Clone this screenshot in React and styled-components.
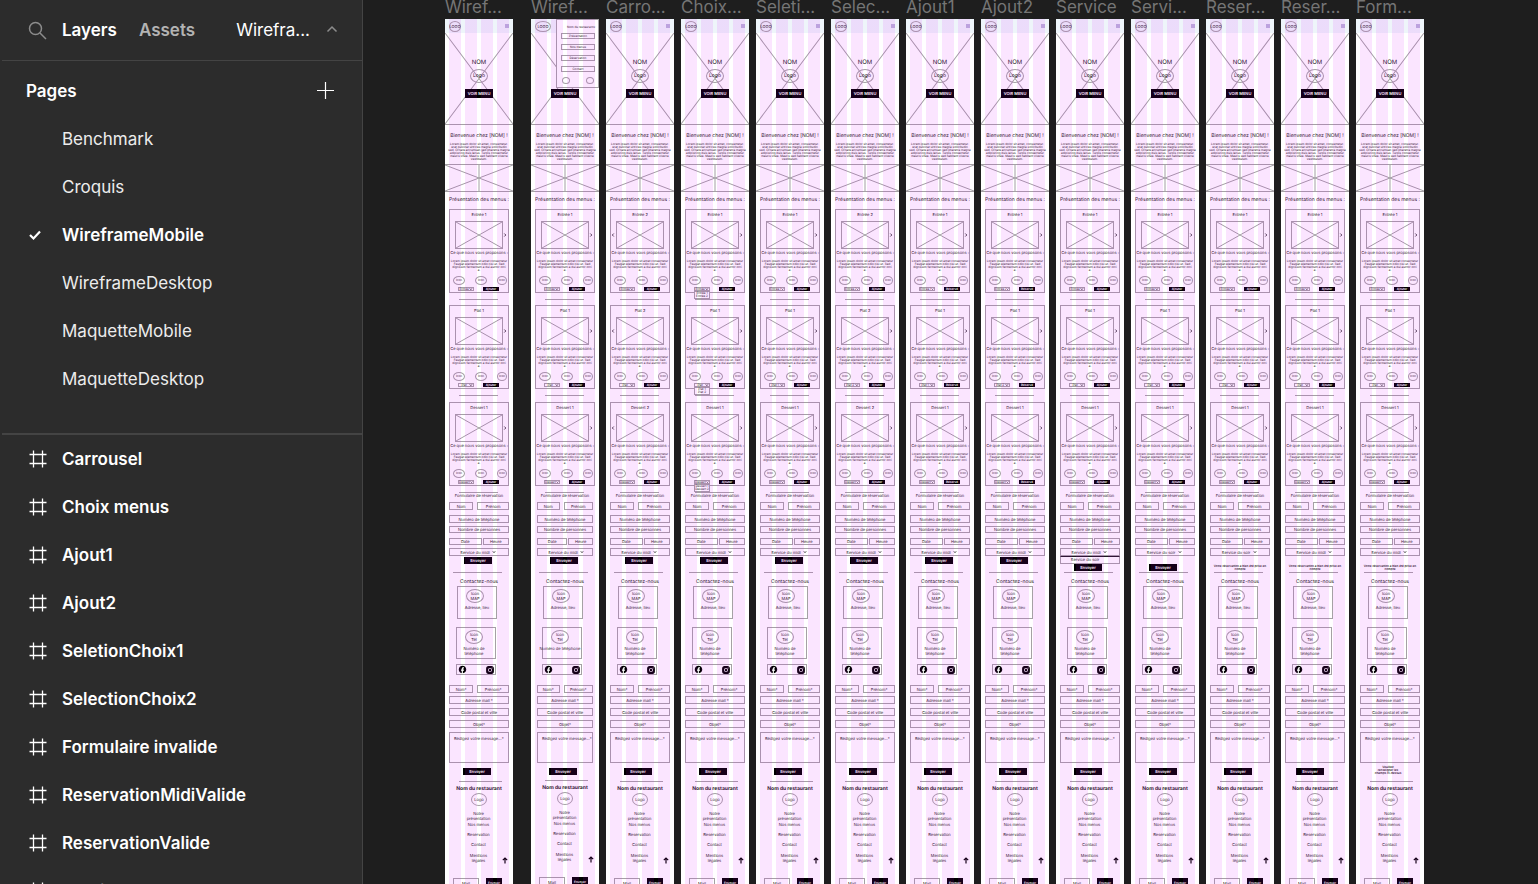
import React from "react";
import styled, { createGlobalStyle, css } from "styled-components";
import { MdFacebook } from "react-icons/md";
import { AiFillInstagram } from "react-icons/ai";

const ink = "#1d1720";
const line = "#a5a1a5";

const GlobalStyle = createGlobalStyle`
  * { box-sizing: border-box; }
  body {
    margin: 0;
    background: #1e1e1e;
    font-family: Inter, "Liberation Sans", sans-serif;
  }
  button, input, select, textarea {
    font-family: inherit;
    text-rendering: inherit;
    margin: 0;
    padding: 0;
    border: 0;
    border-radius: 0;
    background: none;
    color: inherit;
  }
  h1, h2, h3, p, ul { margin: 0; padding: 0; font-weight: 400; }
  ul { list-style: none; }
  svg { display: block; }
`;

/* ---------- editor shell ---------- */

const Editor = styled.div`
  display: flex;
  height: 100vh;
  overflow: hidden;
`;

const Sidebar = styled.aside`
  flex: 0 0 363px;
  padding-left: 2px;
  overflow: hidden;
  background: #2c2c2c;
  border-right: 1px solid #444;
  color: #fff;
  font-size: 17px;
  line-height: 24px;
`;

const TabBar = styled.div`
  display: flex;
  align-items: center;
  height: 61px;
  padding: 0 24px 0 26px;
  border-bottom: 1px solid #444;
`;

const SearchButton = styled.button`
  color: #8c8c8c;
  margin-right: 15px;
`;

const Tab = styled.button`
  font-size: 17px;
  line-height: 24px;
  font-weight: 600;
  margin-right: 22px;
  color: ${(p) => (p.$active ? "#fff" : "#b3b3b3")};
`;

const PagePicker = styled.button`
  display: flex;
  align-items: center;
  gap: 16px;
  margin-left: auto;
  font-size: 17px;
  line-height: 24px;
  color: #fff;
  svg { color: #8c8c8c; }
`;

const PagesPanel = styled.section`
  padding-bottom: 30px;
  border-bottom: 2px solid #444;
`;

const PagesHeader = styled.div`
  display: flex;
  align-items: flex-end;
  justify-content: space-between;
  height: 54px;
  padding: 0 28px 12px 24px;
`;

const PagesTitle = styled.h2`
  font-size: 17px;
  font-weight: 600;
`;

const AddButton = styled.button`
  height: 26px;
`;

const Row = styled.button`
  display: flex;
  align-items: center;
  width: 100%;
  height: 48px;
  padding-left: 26px;
  font-size: 17px;
  line-height: 24px;
  text-align: left;
  color: ${(p) => (p.$strong ? "#fff" : "#ececec")};
  font-weight: ${(p) => (p.$strong ? 600 : 400)};
`;

const RowIcon = styled.span`
  flex: 0 0 34px;
  padding-left: ${(p) => (p.$frame ? 1 : 0)}px;
`;

const Canvas = styled.main`
  display: flex;
  flex: 1;
  gap: 7px;
  min-width: 0;
  padding-left: 82px;
  overflow: hidden;
`;

/* ---------- wireframe frames ---------- */

const FrameItem = styled.section`
  flex: 0 0 68px;
  width: 68px;
  min-width: 0;
  margin-right: ${(p) => (p.$apart ? "11px" : "0")};
`;

const FrameLabel = styled.h2`
  height: 19px;
  font-size: 17px;
  line-height: 14px;
  white-space: nowrap;
  color: #757575;
`;

const Artboard = styled.div`
  position: relative;
  display: flex;
  flex-direction: column;
  background: #fff;
  color: ${ink};
  font-size: 4px;
  line-height: 5px;
  text-align: center;
  text-rendering: geometricPrecision;
  min-height: 100vh;
  &::after {
    content: "";
    position: absolute;
    inset: 0;
    pointer-events: none;
    background: repeating-linear-gradient(
      90deg,
      transparent 0 4px,
      rgba(216, 0, 255, 0.1) 4px 16px
    );
  }
`;

const SiteNav = styled.div`
  display: flex;
  align-items: center;
  justify-content: space-between;
  height: 14px;
  padding: 0 4px 0 4px;
  background: #eef5fa;
`;

const Oval = styled.span`
  display: flex;
  flex: none;
  align-items: center;
  justify-content: center;
  width: ${(p) => p.$w}px;
  height: ${(p) => p.$h}px;
  border: 1px solid ${line};
  border-radius: 50%;
  font-size: ${(p) => p.$size || 4}px;
  line-height: 5px;
  white-space: nowrap;
`;

const Hero = styled.div`
  display: grid;
  height: 92px;
  border-bottom: 1px solid ${line};
  > * { grid-area: 1 / 1; }
`;

const HeroContent = styled.div`
  display: flex;
  flex-direction: column;
  align-items: center;
  padding-top: 26px;
`;

const HeroName = styled.h3`
  margin-bottom: 2px;
  font-size: 6px;
  line-height: 8px;
`;

const DarkButton = styled.button`
  flex: none;
  width: ${(p) => (p.$small ? 16 : 28)}px;
  height: ${(p) => p.$h || 7}px;
  background: #000;
  color: #fff;
  font-size: ${(p) => (p.$small ? 3 : 4)}px;
  line-height: 4px;
  font-weight: 600;
  text-align: center;
`;

const HeroAction = styled.div`
  display: flex;
  margin-top: 6px;
`;

const Cross = styled.svg`
  width: 100%;
  height: 100%;
  fill: none;
  stroke: #a39fa4;
  stroke-width: 1px;
  overflow: hidden;
`;

const Photo = styled.div`
  height: 28px;
  border: solid ${line};
  border-width: ${(p) => (p.$banner ? "1px 0" : "1px")};
  margin-top: ${(p) => (p.$banner ? 3 : 0)}px;
`;

const Title = styled.h3`
  margin-top: ${(p) => p.$top}px;
  font-size: ${(p) => p.$size || 5}px;
  line-height: ${(p) => p.$lh || 8}px;
  font-weight: ${(p) => (p.$bold ? 700 : 400)};
  white-space: nowrap;
  align-self: center;
`;

const Lorem = styled.p`
  margin-top: ${(p) => p.$top}px;
  font-size: 3px;
  line-height: 3px;
  white-space: pre;
  align-self: center;
`;

const Rule = styled.div`
  height: 1px;
  flex: none;
  width: ${(p) => p.$w || 39}px;
  margin: ${(p) => p.$top}px 0 0 ${(p) => p.$left || 14}px;
  background: ${line};
`;

const Card = styled.article`
  display: flex;
  flex: none;
  flex-direction: column;
  width: 60px;
  height: 84px;
  margin: ${(p) => p.$top}px 0 0 4px;
  padding-top: 2px;
  border: 1px solid ${line};
`;

const Carousel = styled.div`
  display: grid;
  grid-template-columns: 5px 48px 5px;
  align-items: center;
  margin-top: 4px;
`;

const Allergens = styled.div`
  display: flex;
  justify-content: space-between;
  margin-top: 4px;
  padding: 0 1px 0 3px;
`;

const OrderRow = styled.div`
  display: flex;
  gap: 9px;
  margin-top: 2px;
  padding-left: 8px;
`;

const selectBox = css`
  display: flex;
  align-items: center;
  border: 1px solid ${line};
`;

const DishSelect = styled.span`
  ${selectBox}
  position: relative;
  width: 16px;
  height: 4px;
  select {
    appearance: none;
    width: 11px;
    height: 4px;
    font-size: 3px;
    line-height: 4px;
    text-align: center;
    text-align-last: center;
  }
`;

const Options = styled.ul`
  position: absolute;
  top: 3px;
  left: -1px;
  width: 16px;
  background: #fff;
  border: 1px solid ${line};
  font-size: 3px;
  line-height: 3px;
`;

const Form = styled.form`
  display: flex;
  flex-direction: column;
  width: ${(p) => (p.$narrow ? 56 : 60)}px;
  margin-left: ${(p) => (p.$narrow ? 6 : 4)}px;
`;

const FieldRow = styled.div`
  display: flex;
  justify-content: space-between;
  gap: ${(p) => p.$gap || 4}px;
  margin-top: ${(p) => p.$top}px;
`;

const fieldStyle = css`
  border: 1px solid ${line};
  color: ${ink};
  font-size: 4px;
  line-height: 5px;
  &::placeholder { color: ${ink}; opacity: 1; }
`;

const Field = styled.input`
  ${fieldStyle}
  flex: ${(p) => p.$grow || 1} 1 0;
  min-width: 0;
  height: ${(p) => p.$h || 8}px;
  text-align: center;
`;

const Message = styled.textarea`
  ${fieldStyle}
  height: 31px;
  margin-top: 4px;
  padding: 3px 0 0 4px;
  text-align: left;
  resize: none;
  overflow: hidden;
  white-space: nowrap;
`;

const ServiceSelect = styled.span`
  ${selectBox}
  height: 8px;
  margin-top: 3px;
  padding-left: 8px;
  select {
    appearance: none;
    width: 34px;
    height: 6px;
    font-size: 4px;
    line-height: 5px;
    text-align: center;
    text-align-last: center;
  }
`;

const ServiceOptions = styled.ul`
  height: 8px;
  padding-right: 10px;
  border: 1px solid ${line};
  border-top-color: ${ink};
`;

const SubmitArea = styled.div`
  display: flex;
  justify-content: center;
  align-items: flex-end;
  height: ${(p) => p.$h}px;
  padding-right: ${(p) => p.$shift || 0}px;
`;

const Note = styled.p`
  font-size: 3px;
  line-height: 3px;
  font-weight: 600;
  white-space: pre;
`;

const ContactBox = styled.div`
  display: flex;
  flex: none;
  flex-direction: column;
  align-items: center;
  width: 40px;
  height: ${(p) => p.$h}px;
  margin: ${(p) => p.$top}px 0 0 ${(p) => p.$left || 11}px;
  padding: 2px 4px 0 0;
  border: 1px solid ${line};
`;

const ContactText = styled.p`
  margin-top: 2px;
  padding-left: ${(p) => p.$indent || 0}px;
  white-space: pre;
`;

const Social = styled.div`
  display: flex;
  flex: none;
  align-items: center;
  justify-content: space-between;
  width: 40px;
  height: 11px;
  margin: 5px 0 0 11px;
  padding-left: 1px;
  border: 1px solid ${line};
  color: #000;
`;

const FooterLinks = styled.nav`
  display: flex;
  flex-direction: column;
  align-items: center;
  margin-top: 5px;
  padding-right: 1px;
  a {
    color: inherit;
    text-decoration: none;
    white-space: pre;
  }
  a + a { margin-top: 1px; }
  a + a + a { margin-top: 5px; }
  a:last-child { margin-top: 6px; }
`;

const BackToTop = styled.a`
  align-self: flex-end;
  height: 7px;
  margin: -6px 5px 0 0;
`;

const Newsletter = styled.form`
  display: flex;
  gap: 7px;
  margin-top: 14px;
  padding: 0 11px 0 8px;
`;

const Drawer = styled.aside`
  position: absolute;
  top: 0;
  right: 0;
  display: flex;
  flex-direction: column;
  width: 43px;
  height: 69px;
  padding: 5px 3px 0 4px;
  background: #fff;
  border: 1px solid ${line};
`;

const DrawerHead = styled.div`
  display: flex;
  justify-content: space-between;
  align-items: center;
  height: 5px;
  padding-left: 6px;
  margin-bottom: 3px;
  font-size: 3px;
  white-space: nowrap;
`;

const DrawerLink = styled.button`
  height: 6px;
  margin-bottom: 5px;
  border: 1px solid ${line};
  font-size: 3px;
  line-height: 4px;
`;

const DrawerIcons = styled.div`
  display: flex;
  justify-content: space-between;
  padding: 0 1px;
`;

/* ---------- icons ---------- */

const SearchIcon = () => (
  <svg width="19" height="19" viewBox="0 0 19 19" fill="none" stroke="currentColor" strokeWidth="1.5">
    <circle cx="7.5" cy="7.5" r="6" />
    <path d="M12 12l6 6" />
  </svg>
);
const CaretUp = () => (
  <svg width="12" height="10" viewBox="0 0 12 10" fill="none" stroke="currentColor" strokeWidth="1.5">
    <path d="M1.5 6.5L6 2l4.5 4.5" />
  </svg>
);
const PlusIcon = () => (
  <svg width="17" height="17" viewBox="0 0 17 17" stroke="#fff" strokeWidth="1.2">
    <path d="M8.5 0v17M0 8.5h17" />
  </svg>
);
const CheckIcon = () => (
  <svg width="14" height="12" viewBox="0 0 14 12" fill="none" stroke="#fff" strokeWidth="2.2">
    <path d="M2 6l3.5 3.5L12 2.5" />
  </svg>
);
const FrameIcon = () => (
  <svg width="18" height="18" viewBox="0 0 18 18" stroke="#fff" strokeWidth="1.3">
    <path d="M4.5 .5v17M13.5 .5v17M.5 4.5h17M.5 13.5h17" />
  </svg>
);
const Chevron = ({ d, size = 4 }) => (
  <svg width={size} height={size} viewBox="0 0 4 4" fill="none" stroke={ink} strokeWidth="0.8">
    <path d={d} />
  </svg>
);
const DownChevron = () => <Chevron d="M.8 1.3L2 2.7 3.2 1.3" />;
const BurgerIcon = () => (
  <svg width="4" height="4" viewBox="0 0 4 4">
    <rect width="4" height="4" fill="#b9b4da" />
  </svg>
);
const UpArrow = () => (
  <svg width="6" height="7" viewBox="0 0 6 7" fill="none" stroke="#000" strokeWidth="1.2">
    <path d="M3 6.5V1M.8 3.2L3 1l2.2 2.2" />
  </svg>
);
const CrossArt = ({ middle }) => (
  <Cross viewBox="0 0 100 100" preserveAspectRatio="none">
    <path
      vectorEffect="non-scaling-stroke"
      d={"M0 0L100 100M100 0L0 100" + (middle ? "M50 0V100" : "")}
    />
  </Cross>
);

/* ---------- wireframe content ---------- */

const introText = `Lorem ipsum dolor sit amet, consectetur.
erat pulvinar ultrices magna sollicitudin
sed. Ornare accumsan sed pharetra magna
adipiscing duis lacus. Turpis consectetur
mauris vitae. Mauris sed habitant viverra
vestibulum.`;

const dishText = `Lorem ipsum dolor sit amet consectetur
Feugiat elementum odio nisi ut. Sed
dignissim fermentum a dui auctor orci
a.`;

function Dish({ name, index, frame, top }) {
  return (
    <Card $top={top}>
      <Title $top={0} $size={4} $lh={5}>{`${name} ${frame.item || 1}`}</Title>
      <Carousel>
        <span>{frame.back && <Chevron d="M2.8 .5L1.3 2 2.8 3.5" />}</span>
        <Photo><CrossArt /></Photo>
        <span>{!frame.back && <Chevron d="M1.3 .5L2.8 2 1.3 3.5" />}</span>
      </Carousel>
      <Title $top={1} $size={4} $lh={5}>Ce que nous vous proposons :</Title>
      <Lorem $top={5}>{dishText}</Lorem>
      <Allergens>
        <Oval $w={12} $h={9} $size={3}>Icon</Oval>
        <Oval $w={12} $h={9} $size={3}>Icon</Oval>
        <Oval $w={10} $h={9} $size={3}>Icon</Oval>
      </Allergens>
      <OrderRow>
        <DishSelect>
          <select aria-label={`${name} ${index}`} defaultValue="a">
            <option value="a">{frame.picked ? `${name} ${frame.picked}` : name}</option>
          </select>
          <DownChevron />
          {frame.open && (
            <Options>
              <li>{name} 1</li>
              <li>{name} 2</li>
            </Options>
          )}
        </DishSelect>
        <DarkButton $small $h={4}>{frame.action || "Ajouter"}</DarkButton>
      </OrderRow>
    </Card>
  );
}

function Wireframe({ frame }) {
  const n = frame.narrow;
  const late = frame.serviceOpen || frame.lateSubmit || frame.booked;
  return (
    <Artboard>
      <SiteNav>
        <Oval $w={n ? 16 : 12} $h={11}>LOGO</Oval>
        <BurgerIcon />
      </SiteNav>
      <Hero>
        <CrossArt />
        <HeroContent>
          <HeroName>NOM</HeroName>
          <Oval $w={18} $h={14} $size={5}>Logo</Oval>
          <HeroAction><DarkButton $h={9}>VOIR MENU</DarkButton></HeroAction>
        </HeroContent>
      </Hero>
      {n && (
        <Drawer>
          <DrawerHead><span>Nom du restaurant</span><span>x</span></DrawerHead>
          <DrawerLink>Présentation</DrawerLink>
          <DrawerLink>Nos menus</DrawerLink>
          <DrawerLink>Réservation</DrawerLink>
          <DrawerLink>Contact</DrawerLink>
          <DrawerIcons><Oval $w={8} $h={7} /><Oval $w={8} $h={7} /></DrawerIcons>
        </Drawer>
      )}
      <Title $top={7}>Bienvenue chez [NOM] !</Title>
      <Lorem $top={3}>{introText}</Lorem>
      <Photo $banner><CrossArt middle /></Photo>
      <Title $top={5} $lh={7}>Présentation des menus :</Title>

      <Dish name="Entrée" index={1} frame={frame} top={5} />
      <Rule $top={6} />
      <Dish name="Plat" index={2} frame={frame} top={5} />
      <Rule $top={6} />
      <Dish name="Dessert" index={3} frame={frame} top={6} />
      <Rule $top={6} />

      <Title $top={0} $size={4} $lh={5}>Formulaire de réservation</Title>
      <Form $narrow={n}>
        <FieldRow $top={4}>
          <Field aria-label="Nom" placeholder="Nom" $grow={3} />
          <Field aria-label="Prénom" placeholder="Prénom" $grow={4} />
        </FieldRow>
        <FieldRow $top={5}><Field aria-label="Numéro de téléphone" placeholder="Numéro de téléphone" /></FieldRow>
        <FieldRow $top={3}><Field aria-label="Nombre de personnes" placeholder="Nombre de personnes" $h={7} /></FieldRow>
        <FieldRow $top={5} $gap={1}>
          <Field aria-label="Date" placeholder="Date" $grow={5} $h={7} />
          <Field aria-label="Heure" placeholder="Heure" $grow={4} $h={7} />
        </FieldRow>
        <ServiceSelect>
          <select aria-label="Service" defaultValue="s">
            <option value="s">{frame.evening ? "Service du soir" : "Service du midi"}</option>
          </select>
          <DownChevron />
        </ServiceSelect>
        {frame.serviceOpen && <ServiceOptions><li>Service du soir</li></ServiceOptions>}
        <SubmitArea $h={frame.serviceOpen ? 7 : late ? 15 : 8} $shift={frame.booked ? 0 : late ? 4 : 2}>
          {frame.booked ? (
            <Note>{"Votre réservation a bien été prise en\ncompte"}</Note>
          ) : (
            <DarkButton type="button">Envoyer</DarkButton>
          )}
        </SubmitArea>
      </Form>
      <Rule $top={late ? 1 : 8} $left={8} $w={49} />

      <Title $top={5}>Contactez-nous</Title>
      <ContactBox $top={0} $h={33} $left={12}>
        <Oval $w={18} $h={14}>Icon<br />MAP</Oval>
        <ContactText $indent={4}>Adresse, lieu</ContactText>
      </ContactBox>
      <ContactBox $top={8} $h={32}>
        <Oval $w={18} $h={14}>Icon<br />Tél</Oval>
        <ContactText>{n ? "Numéro de téléphone" : "Numéro de\ntéléphone"}</ContactText>
      </ContactBox>
      <Social><MdFacebook size={9} /><AiFillInstagram size={10} /></Social>

      <Form $narrow={n}>
        <FieldRow $top={10}>
          <Field aria-label="Nom*" placeholder="Nom*" $grow={3} />
          <Field aria-label="Prénom*" placeholder="Prénom*" $grow={4} />
        </FieldRow>
        <FieldRow $top={3}><Field aria-label="Adresse mail" placeholder="Adresse mail *" /></FieldRow>
        <FieldRow $top={4}><Field aria-label="Code postal et ville" placeholder="Code postal et ville" /></FieldRow>
        <FieldRow $top={4}><Field aria-label="Objet" placeholder="Objet*" /></FieldRow>
        <Message aria-label="Message" placeholder="Rédigez votre message...*" />
        <SubmitArea $h={12} $shift={frame.shift || 4}>
          {frame.invalid ? (
            <Note>{"Veuillez\nrenseigner les\nchamps ci-dessus"}</Note>
          ) : (
            <DarkButton type="button">Envoyer</DarkButton>
          )}
        </SubmitArea>
      </Form>
      <Rule $top={n ? 5 : 6} $w={43} />

      <Title $top={4} $lh={6} $bold>Nom du restaurant</Title>
      <Title as="div" $top={1}><Oval $w={16} $h={13}>Logo</Oval></Title>
      <FooterLinks>
        <a href="#presentation">{"Notre\nprésentation"}</a>
        <a href="#menus">Nos menus</a>
        <a href="#reservation">Reservation</a>
        <a href="#contact">Contact</a>
        <a href="#mentions">{"Mentions\nlégales"}</a>
      </FooterLinks>
      <BackToTop href="#top" aria-label="Haut de page"><UpArrow /></BackToTop>
      <Newsletter>
        <Field aria-label="Mail" placeholder="Mail" $h={10} />
        <DarkButton type="button" $small $h={10}>Envoyer</DarkButton>
      </Newsletter>
    </Artboard>
  );
}

const pages = ["Benchmark", "Croquis", "WireframeMobile", "WireframeDesktop", "MaquetteMobile", "MaquetteDesktop"];

const layers = [
  "Carrousel", "Choix menus", "Ajout1", "Ajout2", "SeletionChoix1", "SelectionChoix2",
  "Formulaire invalide", "ReservationMidiValide", "ReservationValide", "Service",
];

const frames = [
  { label: "Wiref...", apart: true },
  { label: "Wiref...", narrow: true },
  { label: "Carro...", item: 2, back: true },
  { label: "Choix...", open: true },
  { label: "Seleti...", picked: 1 },
  { label: "Selec...", item: 2, picked: 2 },
  { label: "Ajout1", picked: 1, action: "Réservé" },
  { label: "Ajout2", picked: 2, action: "Réservé" },
  { label: "Service", serviceOpen: true },
  { label: "Servi...", evening: true, lateSubmit: true },
  { label: "Reser...", evening: true, booked: true },
  { label: "Reser...", booked: true, shift: 10 },
  { label: "Form...", booked: true, invalid: true },
];

export default function App() {
  return (
    <Editor>
      <GlobalStyle />
      <Sidebar>
        <TabBar>
          <SearchButton aria-label="Search"><SearchIcon /></SearchButton>
          <Tab $active>Layers</Tab>
          <Tab>Assets</Tab>
          <PagePicker>Wirefra...<CaretUp /></PagePicker>
        </TabBar>
        <PagesPanel>
          <PagesHeader>
            <PagesTitle>Pages</PagesTitle>
            <AddButton aria-label="Add page"><PlusIcon /></AddButton>
          </PagesHeader>
          {pages.map((p) => (
            <Row key={p} $strong={p === "WireframeMobile"}>
              <RowIcon>{p === "WireframeMobile" && <CheckIcon />}</RowIcon>
              {p}
            </Row>
          ))}
        </PagesPanel>
        {layers.map((l) => (
          <Row key={l} $strong>
            <RowIcon $frame><FrameIcon /></RowIcon>
            {l}
          </Row>
        ))}
      </Sidebar>
      <Canvas>
        {frames.map((f, i) => (
          <FrameItem key={i} $apart={f.apart}>
            <FrameLabel>{f.label}</FrameLabel>
            <Wireframe frame={f} />
          </FrameItem>
        ))}
      </Canvas>
    </Editor>
  );
}
